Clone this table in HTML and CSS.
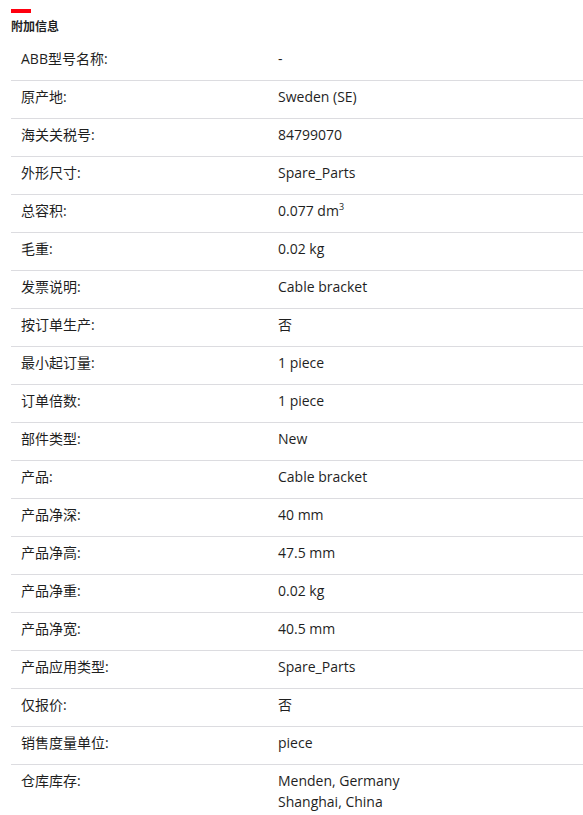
FILE: index.html
```html
<!DOCTYPE html>
<html lang="zh">
<head>
<meta charset="utf-8">
<link rel="stylesheet" href="styles.css">
</head>
<body>
<section class="info">
  <div class="accent"></div>
  <h2 class="title">附加信息</h2>
  <dl class="table">
    <div class="row"><dt>ABB型号名称:</dt><dd>-</dd></div>
    <div class="row"><dt>原产地:</dt><dd>Sweden (SE)</dd></div>
    <div class="row"><dt>海关关税号:</dt><dd>84799070</dd></div>
    <div class="row"><dt>外形尺寸:</dt><dd>Spare_Parts</dd></div>
    <div class="row"><dt>总容积:</dt><dd>0.077 dm<sup>3</sup></dd></div>
    <div class="row"><dt>毛重:</dt><dd>0.02 kg</dd></div>
    <div class="row"><dt>发票说明:</dt><dd>Cable bracket</dd></div>
    <div class="row"><dt>按订单生产:</dt><dd>否</dd></div>
    <div class="row"><dt>最小起订量:</dt><dd>1 piece</dd></div>
    <div class="row"><dt>订单倍数:</dt><dd>1 piece</dd></div>
    <div class="row"><dt>部件类型:</dt><dd>New</dd></div>
    <div class="row"><dt>产品:</dt><dd>Cable bracket</dd></div>
    <div class="row"><dt>产品净深:</dt><dd>40 mm</dd></div>
    <div class="row"><dt>产品净高:</dt><dd>47.5 mm</dd></div>
    <div class="row"><dt>产品净重:</dt><dd>0.02 kg</dd></div>
    <div class="row"><dt>产品净宽:</dt><dd>40.5 mm</dd></div>
    <div class="row"><dt>产品应用类型:</dt><dd>Spare_Parts</dd></div>
    <div class="row"><dt>仅报价:</dt><dd>否</dd></div>
    <div class="row"><dt>销售度量单位:</dt><dd>piece</dd></div>
    <div class="row last"><dt>仓库库存:</dt><dd>Menden, Germany<br>Shanghai, China</dd></div>
  </dl>
</section>
</body>
</html>
```
FILE: styles.css
```css
html, body {
  margin: 0;
  padding: 0;
  background: #ffffff;
}
body {
  font-family: "Open Sans", "Noto Sans CJK SC", sans-serif;
  color: #1f1f1f;
  font-size: 14px;
}
.info {
  padding: 9px 0 0 11px;
}
.accent {
  width: 20px;
  height: 4px;
  background: #ff000f;
}
.title {
  margin: 5px 0 0 0;
  font-size: 12px;
  line-height: 18px;
  font-weight: bold;
}
.table {
  margin: 7px 0 0 0;
}
.row {
  display: grid;
  grid-template-columns: 257px 1fr;
  border-bottom: 1px solid #dcdce0;
}
.row.last {
  border-bottom: none;
}
.row dt, .row dd {
  margin: 0;
  padding: 5px 10px 11px 10px;
  line-height: 21px;
}
sup {
  font-size: 9px;
  line-height: 0;
  vertical-align: 6px;
}
```
